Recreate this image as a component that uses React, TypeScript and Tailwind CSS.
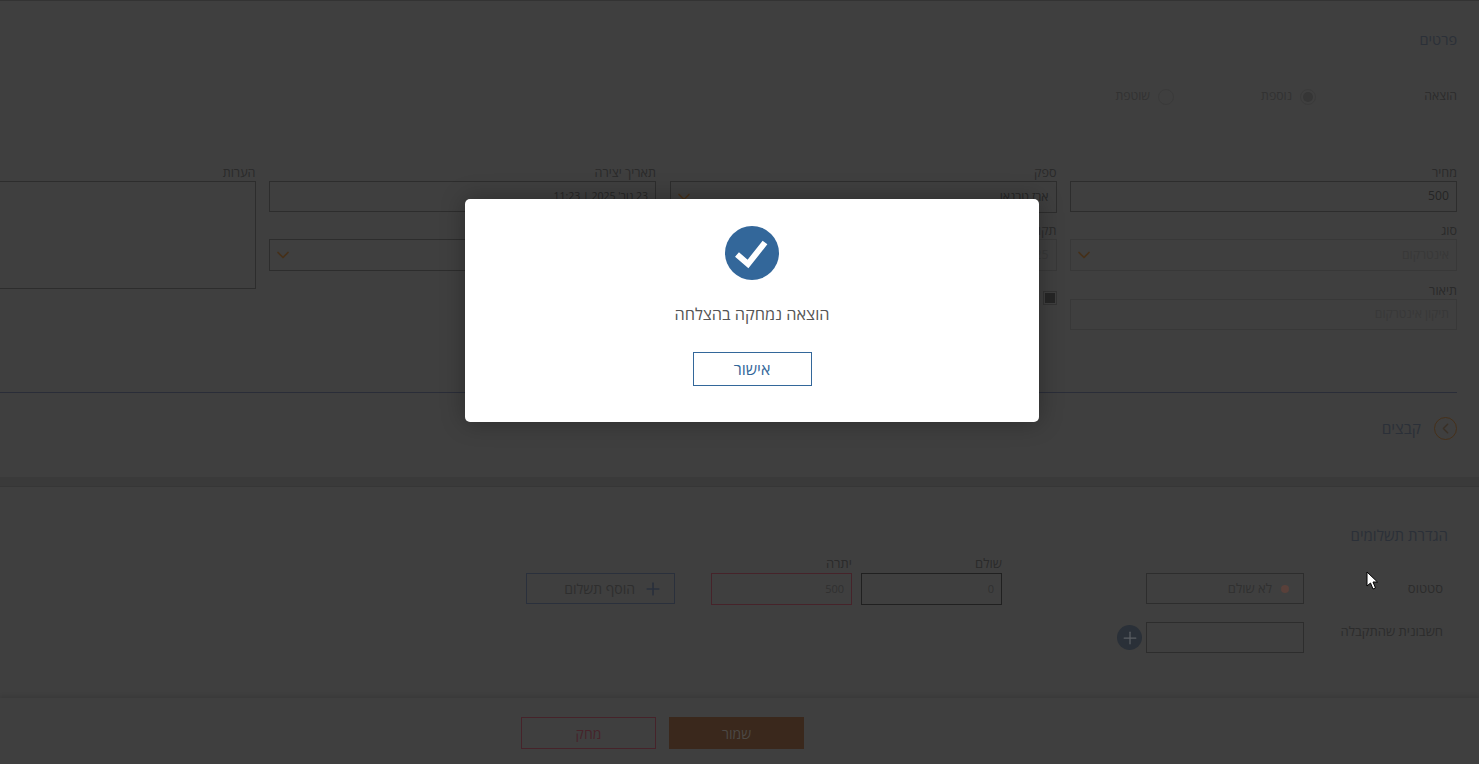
import { ChevronDown, ChevronLeft, Plus } from 'lucide-react';
import type { ReactNode } from 'react';

/* Expense form, dimmed, behind a "deleted successfully" dialog */

interface FieldProps {
    label: string;
    mt?: string;
    children: ReactNode;
}

function Field({ label, mt = '', children }: FieldProps) {
    return (
        <div className={mt}>
            <div className="h-[17px] text-[12.6px] leading-[17px] text-[#2a2a2a]">{label}</div>
            {children}
        </div>
    );
}

function Box({ value = '', muted = false, tall = false, small = false }: { value?: string; muted?: boolean; tall?: boolean; small?: boolean }) {
    return (
        <div
            className={`flex items-center border px-[7px] ${small ? 'text-[10.5px]' : 'text-[12.2px]'} ${tall ? 'h-[32px]' : 'h-[31px]'} ${
                muted ? 'border-[#383838] text-[#383838]' : 'border-[#2d2d2d] text-[#252525]'
            }`}
        >
            {value}
        </div>
    );
}

function Select({ value = '', muted = false }: { value?: string; muted?: boolean }) {
    return (
        <div
            className={`flex h-[32px] items-center justify-between border pr-[7px] pl-[3px] text-[12.2px] ${
                muted ? 'border-[#383838] text-[#383838]' : 'border-[#2d2d2d] text-[#252525]'
            }`}
        >
            <span>{value}</span>
            <ChevronDown size={20} strokeWidth={2} className="text-[#463019]" />
        </div>
    );
}

function Radio({ label, checked = false }: { label: string; checked?: boolean }) {
    return (
        <div className="flex w-[142px] items-center gap-[8px] text-[12.3px] text-[#323232]">
            <span className="flex h-[16px] w-[16px] items-center justify-center rounded-full border border-[#3a3a3a]">
                {checked && <span className="h-[10px] w-[10px] rounded-full bg-[#363636]" />}
            </span>
            <span>{label}</span>
        </div>
    );
}

function DetailsSection() {
    return (
        <section className="h-[477px] overflow-hidden border-t border-[#333] pr-[22px]">
            <h2 className="mt-[27px] h-[24px] text-[14.5px] leading-[24px] font-normal text-[#2b3038]">פרטים</h2>
            <div className="mt-[34px] flex h-[20px] items-center pt-[1px]">
                <div className="w-[141px] text-[12.3px] text-[#2c2c2c]">הוצאה</div>
                <Radio label="נוספת" checked />
                <Radio label="שוטפת" />
            </div>
            <div className="mt-[58px] flex gap-x-[13.5px]">
                <div className="w-[387px] shrink-0">
                    <Field label="מחיר">
                        <Box value="500" />
                    </Field>
                    <Field label="סוג" mt="mt-[10px]">
                        <Select value="אינטרקום" muted />
                    </Field>
                    <Field label="תיאור" mt="mt-[11px]">
                        <Box value="תיקון אינטרקום" muted />
                    </Field>
                </div>
                <div className="w-[387px] shrink-0">
                    <Field label="ספק">
                        <Select value="ארז טרנאו" />
                    </Field>
                    <Field label="תקופה" mt="mt-[9px]">
                        <Box value="2025" muted tall />
                    </Field>
                    <div className="mt-[20px] flex h-[14px] w-[14px] items-center justify-center border border-[#333]">
                        <span className="h-[10px] w-[10px] bg-[#262626]" />
                    </div>
                </div>
                <div className="w-[387px] shrink-0">
                    <Field label="תאריך יצירה">
                        <Box value="23 נוב' 2025 | 11:23" small />
                    </Field>
                    <Field label="חשבון" mt="mt-[10px]">
                        <Select />
                    </Field>
                </div>
                <div className="w-[387px] shrink-0">
                    <Field label="הערות">
                        <div className="h-[108px] border border-[#2d2d2d]" />
                    </Field>
                </div>
            </div>
            <div className="mt-[62px] h-px bg-[#2a2d38]" />
            <div className="mt-[24px] flex items-center gap-[13px]">
                <span className="flex h-[23px] w-[23px] items-center justify-center rounded-full border border-[#463019]">
                    <ChevronLeft size={17} strokeWidth={2} className="text-[#3a3026]" />
                </span>
                <span className="text-[15.5px] text-[#2b3038]">קבצים</span>
            </div>
        </section>
    );
}

function PaymentsSection() {
    return (
        <section className="h-[211px] pt-[36px] pr-[31px]">
            <h2 className="h-[24px] text-[15px] leading-[24px] font-normal text-[#2b3038]">הגדרת תשלומים</h2>
            <div className="mt-[9px] flex items-start pr-[5px]">
                <div className="mt-[17px] flex h-[31px] w-[139px] items-center text-[13px] text-[#2c2c2c]">סטטוס</div>
                <div className="mt-[17px] flex h-[31px] w-[158px] items-center gap-[9px] border border-[#2d2d2d] pr-[14px] text-[13px] text-[#303030]">
                    <span className="h-[8px] w-[8px] rounded-full bg-[#59403a]" />
                    <span>לא שולם</span>
                </div>
                <div className="mr-[144px] w-[141px]">
                    <div className="h-[17px] text-[13px] leading-[15px] text-[#2a2a2a]">שולם</div>
                    <div className="flex h-[32px] items-center border border-[#202020] px-[7px] text-[11px] text-[#303030]">0</div>
                </div>
                <div className="mr-[9px] w-[141px]">
                    <div className="h-[17px] text-[13px] leading-[15px] text-[#2a2a2a]">יתרה</div>
                    <div className="flex h-[32px] items-center border border-[#46232a] px-[7px] text-[11px] text-[#303030]">500</div>
                </div>
                <button className="mt-[17px] mr-[36px] flex h-[31px] w-[149px] items-center gap-[8px] border border-[#2a303c] pr-[11px] text-[14px] text-[#2e2e2e]">
                    <Plus size={20} strokeWidth={2} className="text-[#2a303c]" />
                    <span>הוסף תשלום</span>
                </button>
            </div>
            <div className="mt-[17px] flex items-start pr-[5px]">
                <div className="h-[18px] w-[139px] text-[13px] leading-[18px] text-[#2c2c2c]">חשבונית שהתקבלה</div>
                <div className="h-[31px] w-[158px] border border-[#2d2d2d]" />
                <span className="mt-[3px] mr-[4px] flex h-[25px] w-[25px] items-center justify-center rounded-full bg-[#2a3038]">
                    <Plus size={20} strokeWidth={1.5} className="text-[#5a5e63]" />
                </span>
            </div>
        </section>
    );
}

function Footer() {
    return (
        <footer className="flex h-[66px] gap-[13px] pt-[19px] pr-[675px] shadow-[0_-2px_4px_rgba(0,0,0,0.1)]">
            <button className="h-[32px] w-[135px] bg-[#3a281c] text-[14px] text-[#4c4845]">שמור</button>
            <button className="h-[32px] w-[135px] border border-[#46232a] text-[14px] text-[#46232a]">מחק</button>
        </footer>
    );
}

function SuccessDialog() {
    return (
        <div className="absolute top-[199px] left-[465px] flex h-[223px] w-[574px] flex-col items-center rounded-[5px] bg-white pt-[27px] shadow-[0_0_24px_rgba(0,0,0,0.3)]">
            <svg width="54" height="54" viewBox="0 0 54 54">
                <circle cx="27" cy="27" r="27" fill="#33679a" />
                <path d="M12 28.5 L23 38 L40 16.5" fill="none" stroke="#fff" strokeWidth="6" />
            </svg>
            <p className="mt-[23px] h-[22px] text-[16.3px] leading-[22px] text-[#555]">הוצאה נמחקה בהצלחה</p>
            <button className="mt-[27px] h-[34px] w-[119px] border border-[#33679a] text-[16px] text-[#33679a]">אישור</button>
        </div>
    );
}

export default function App() {
    return (
        <div
            dir="rtl"
            className="relative h-[764px] w-[1479px] overflow-hidden bg-[#3f3f3f] font-['Open_Sans','Noto_Sans',sans-serif]"
        >
            <DetailsSection />
            <div className="h-[10px] border-b border-[#363636] bg-[#3a3a3a]" />
            <PaymentsSection />
            <Footer />
            <SuccessDialog />
            {/* mouse pointer caught in the screenshot */}
            <svg className="absolute top-[571px] left-[1366px]" width="13" height="20" viewBox="0 0 13 20">
                <path d="M1 1 L1 15 L4.5 12 L7 18 L9.5 17 L7 11 L11.5 11 Z" fill="#fff" stroke="#000" strokeWidth="1" />
            </svg>
        </div>
    );
}
